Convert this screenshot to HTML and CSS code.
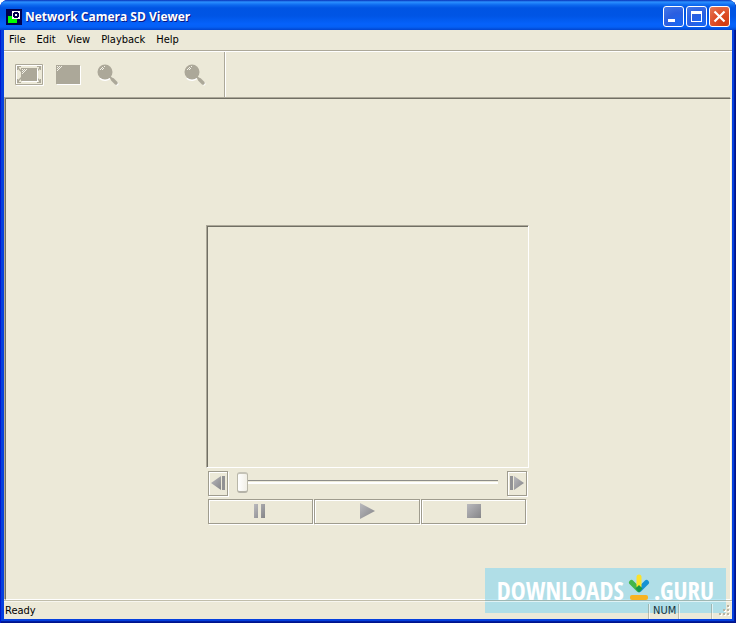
FILE: index.html
```html
<!DOCTYPE html>
<html lang="en">
<head>
<meta charset="utf-8">
<title>Network Camera SD Viewer</title>
<link rel="stylesheet" href="styles.css">
</head>
<body>
<svg class="defs" aria-hidden="true">
  <defs>
    <linearGradient id="steel" x1="0" y1="0" x2="1" y2="1">
      <stop offset="0" stop-color="#b9b9bd"/><stop offset="1" stop-color="#858588"/>
    </linearGradient>
    <pattern id="dither" width="2" height="2" patternUnits="userSpaceOnUse">
      <path fill="#f4f2e8" d="M0 0h1v1H0zM1 1h1v1H1z"/>
    </pattern>
    <symbol id="lens" viewBox="0 0 22 22">
      <path d="M16 16l4 4" stroke="#fff" stroke-width="3" stroke-linecap="round"/>
      <path d="M3 14a7.500 7.500 0 0 0 11-1" stroke="#fff" stroke-width="2"/>
      <circle cx="8" cy="8" r="7.500" fill="#aca899"/>
      <path d="M12 12l3 3" stroke="#aca899" stroke-width="2"/>
      <path d="M15.500 15.500l3.500 3.500" stroke="#aca899" stroke-width="3.500" stroke-linecap="round"/>
      <path fill="#f4f2e8" d="M5 3h1v1H5zM7 2h1v1H7zM4 4h1v1H4zM6 4h1v1H6zM3 5h1v1H3zM5 5h1v1H5z"/>
    </symbol>
  </defs>
</svg>
<div class="window">
  <header class="titlebar">
    <svg class="app-icon" viewBox="0 0 16 16" aria-hidden="true">
      <path fill="#00004c" d="M0 0h16v16H0z"/><path fill="#0f0" d="M2 7h9v7H2z"/>
      <path fill="#fff" d="M6 2h8v8H6z"/><path fill="#00004c" d="M8 3h4v1h1v4h-1v1H8V8H7V4h1z"/><path fill="#fff" d="M9 5h2v2H9z"/>
    </svg>
    <h1>Network Camera SD Viewer</h1>
    <div class="window-buttons">
      <button class="caption" aria-label="Minimize"><svg viewBox="0 0 21 21"><path fill="#fff" d="M5 13h7v3H5z"/></svg></button>
      <button class="caption" aria-label="Maximize"><svg viewBox="0 0 21 21"><path fill="#fff" fill-rule="evenodd" d="M5 5h11v11H5zM6 8v7h9V8z"/></svg></button>
      <button class="caption close" aria-label="Close"><svg viewBox="0 0 21 21"><path stroke="#fff" stroke-width="2.200" d="M5.500 5.500l10 10m0-10l-10 10"/></svg></button>
    </div>
  </header>
  <div class="client">
    <nav class="menu">
      <button>File</button><button>Edit</button><button>View</button><button>Playback</button><button>Help</button>
    </nav>
    <div class="toolbar">
      <div class="tools">
        <button class="tool" aria-label="Fit to window"><svg width="29" height="22" viewBox="0 0 29 22">
          <path d="M1.500 1.500h27v20h-27z" fill="none" stroke="#fff"/><path d="M.5.500h27v20H.5z" fill="none" stroke="#aca899"/>
          <path d="M2 2h4v1H4v1l3 3-1 1-3-3v1H2zM26 2h-4v1h2v1l-3 3 1 1 3-3v1h1zM2 19h4v-1H4v-1l3-3-1-1-3 3v-1H2zM26 19h-4v-1h2v-1l-3-3 1-1 3 3v-1h1z" fill="#aca899"/>
          <path d="M7 5h16v13H7z" fill="#fff"/><path d="M6 4h16v13H6z" fill="#aca899"/><path d="M7 5h6l-6 6z" fill="url(#dither)"/>
        </svg></button>
        <button class="tool" aria-label="Full screen"><svg width="25" height="20" viewBox="0 0 25 20"><path fill="#fff" d="M1 1h24v19H1z"/><path fill="#aca899" d="M0 0h24v19H0z"/><path d="M1 1h6L1 7z" fill="url(#dither)"/></svg></button>
        <button class="tool zoom-in" aria-label="Zoom in"><svg width="22" height="22"><use href="#lens"/></svg></button>
        <button class="tool zoom-out" aria-label="Zoom out"><svg width="22" height="22"><use href="#lens"/></svg></button>
      </div>
    </div>
    <main class="view">
      <section class="player">
        <div class="screen"></div>
        <div class="seek">
          <button class="key step" aria-label="Previous frame"><svg width="16" height="16" viewBox="0 0 16 16"><path fill="url(#steel)" d="M1 8l10-7v14z"/><path fill="#929294" d="M12 1h3v14h-3z"/></svg></button>
          <input class="slider" type="range" min="0" max="100" value="0" aria-label="Position">
          <button class="key step" aria-label="Next frame"><svg width="16" height="16" viewBox="0 0 16 16"><path fill="url(#steel)" d="M15 8L5 1v14z"/><path fill="#929294" d="M1 1h3v14H1z"/></svg></button>
        </div>
        <div class="transport">
          <button class="key" aria-label="Pause"><svg width="16" height="16" viewBox="0 0 16 16"><path fill="url(#steel)" d="M2 1h4v14H2zM9 1h4v14H9z"/></svg></button>
          <button class="key" aria-label="Play"><svg width="16" height="16" viewBox="0 0 16 16"><path fill="url(#steel)" d="M1 0l15 8-15 8z"/></svg></button>
          <button class="key" aria-label="Stop"><svg width="16" height="16" viewBox="0 0 16 16"><path fill="url(#steel)" d="M1 1h14v14H1z"/></svg></button>
        </div>
      </section>
    </main>
    <footer class="status">
      <span class="message">Ready</span>
      <span class="pane"></span><span class="pane num">NUM</span><span class="pane"></span>
      <svg class="grip" width="14" height="14" viewBox="0 0 14 14" aria-hidden="true">
        <path fill="#fff" d="M10 2h2v2h-2zM6 6h2v2H6zM10 6h2v2h-2zM2 10h2v2H2zM6 10h2v2H6zM10 10h2v2h-2z"/>
        <path fill="#b8b4a3" d="M9 1h2v2H9zM5 5h2v2H5zM9 5h2v2H9zM1 9h2v2H1zM5 9h2v2H5zM9 9h2v2H9z"/>
      </svg>
    </footer>
  </div>
  <div class="watermark">
    <span>DOWNLOADS</span>
    <svg width="22" height="28" viewBox="0 0 22 28" aria-hidden="true">
      <path stroke="#43b649" stroke-width="5" stroke-linecap="round" d="M3.500 8.500l7 7"/>
      <path stroke="#1692d4" stroke-width="5" stroke-linecap="round" d="M18.500 8.500l-7 7"/>
      <path stroke="#fce22b" stroke-width="5" stroke-linecap="round" d="M11 3v9"/>
      <path fill="#199a48" d="M11 11l3.500 3.500L11 18.500l-3.500-4z"/>
      <rect x="2" y="21" width="18" height="5" rx="2" fill="#f7b322"/>
    </svg>
    <span>.GURU</span>
  </div>
</div>
</body>
</html>
```
FILE: styles.css
```css
* { box-sizing: border-box; }
body {
  margin: 0;
  background: #fff;
  color: #000;
  font: 11px/14px "DejaVu Sans Condensed", Tahoma, sans-serif;
}
button { margin: 0; padding: 0; border: 0; background: none; color: inherit; font: inherit; }
svg { display: block; fill: none; }
.defs { position: absolute; width: 0; height: 0; }
.window {
  position: relative;
  display: flex;
  flex-direction: column;
  min-height: 100vh;
  padding: 0 4px 4px;
  border-radius: 8px 8px 0 0;
  background: #0540de;
  box-shadow: inset 1px 0 #0019cf, inset -1px -1px #00138c, inset -2px -2px #001ea0;
}
.titlebar {
  display: flex;
  align-items: center;
  height: 30px;
  margin: 0 -4px;
  padding: 3px 6px 0;
  border-radius: 8px 8px 0 0;
  background: linear-gradient(#0831b8 0, #2b90ff 2px, #0d69ef 5px, #0054e3 8px, #0055e5 16px, #0562fb 24px, #0560f5 27px, #0145ce 30px);
}
.app-icon { width: 16px; height: 16px; }
h1 {
  flex: 1;
  margin: 0 0 0 3px;
  color: #fff;
  font: bold 12px/16px "Open Sans", "Trebuchet MS", sans-serif;
  text-shadow: 1px 1px #0a1883;
}
.window-buttons { display: flex; gap: 2px; }
.caption {
  width: 21px;
  height: 21px;
  border: 1px solid #fff;
  border-radius: 3px;
  background: radial-gradient(circle at 75% 90%, #1767f4, #2a5ee0 50%, #4478e8);
}
.caption svg { width: 21px; height: 21px; margin: -1px; }
.caption.close { background: radial-gradient(circle at 75% 90%, #d13a10, #dd4e28 50%, #e67a58); }
.client { flex: 1; display: flex; flex-direction: column; background: #ece9d8; }
.menu { display: flex; gap: 11px; height: 20px; padding: 0 5px; }
.toolbar {
  height: 48px;
  border-top: 1px solid #aca899;
  box-shadow: inset 0 1px #fff;
}
.tools {
  display: flex;
  align-items: center;
  width: 222px;
  height: 46px;
  margin-top: 1px;
  padding: 0 19px 0 11px;
  border-right: 1px solid #fff;
  box-shadow: inset -1px 0 #aca899;
}
.tool { margin-right: 12px; }
.tool.zoom-in { margin: 0 4px; }
.tool.zoom-out { margin: 0 0 0 auto; }
.view {
  flex: 1;
  display: flex;
  align-items: center;
  justify-content: center;
  margin: 0 1px;
  padding: 50px 2px 0 0;
  border: 1px solid #716f64;
  border-right-color: #fff;
  border-bottom-color: #fff;
  box-shadow: -1px -1px #aca899;
}
.player { width: 323px; }
.screen {
  height: 243px;
  border: 1px solid #aca899;
  border-right-color: #fff;
  border-bottom-color: #fff;
  box-shadow: inset 1px 1px #716f64;
}
.seek { display: flex; align-items: center; gap: 9px; padding: 3px 2px 0; }
.key {
  display: flex;
  align-items: center;
  justify-content: center;
  height: 25px;
  border: 1px solid #9f9c8e;
  box-shadow: inset 1px 1px #fff, 1px 1px #fff;
}
.step { width: 20px; }
.slider {
  flex: 1;
  min-width: 0;
  height: 25px;
  margin: 0;
  padding-bottom: 2px;
  background: none;
  appearance: none;
}
.slider::-webkit-slider-runnable-track {
  height: 4px;
  border-top: 1px solid #8e8e89;
  border-bottom: 2px solid #fff;
}
.slider::-webkit-slider-thumb {
  appearance: none;
  width: 11px;
  height: 21px;
  margin-top: -9px;
  border: 1px solid #b9b7a9;
  border-top: 2px solid #c5c3b7;
  border-bottom: 2px solid #b5b3a8;
  border-radius: 3px;
  background: linear-gradient(90deg, #fff, #f1efe6);
}
.transport {
  display: grid;
  grid-template-columns: repeat(3, 1fr);
  gap: 1px;
  padding: 3px 2px 0;
}
.status {
  position: relative;
  z-index: 1;
  display: flex;
  align-items: center;
  height: 19px;
  padding: 2px 0 0 1px;
  border-top: 1px solid rgb(140 135 115 / 45%);
  box-shadow: inset 0 1px rgb(255 255 255 / 60%);
}
.message { flex: 1; }
.pane {
  align-self: stretch;
  margin-top: 1px;
  border-right: 1px solid rgb(140 135 115 / 45%);
  box-shadow: 1px 0 rgb(255 255 255 / 60%);
}
.num { width: 30px; padding-left: 4px; color: #17343c; }
.num + .pane { width: 33px; }
.grip { margin-left: 6px; }
.watermark {
  position: absolute;
  right: 10px;
  bottom: 10px;
  display: flex;
  align-items: center;
  justify-content: center;
  gap: 4px;
  width: 241px;
  height: 45px;
  padding-bottom: 2px;
  background: rgb(144 216 240 / 65%);
  color: #fff;
  font: bold 25px/20px "Open Sans Condensed", "Liberation Sans Narrow", "Liberation Sans", sans-serif;
}
.watermark svg { margin-top: -4px; }
```
